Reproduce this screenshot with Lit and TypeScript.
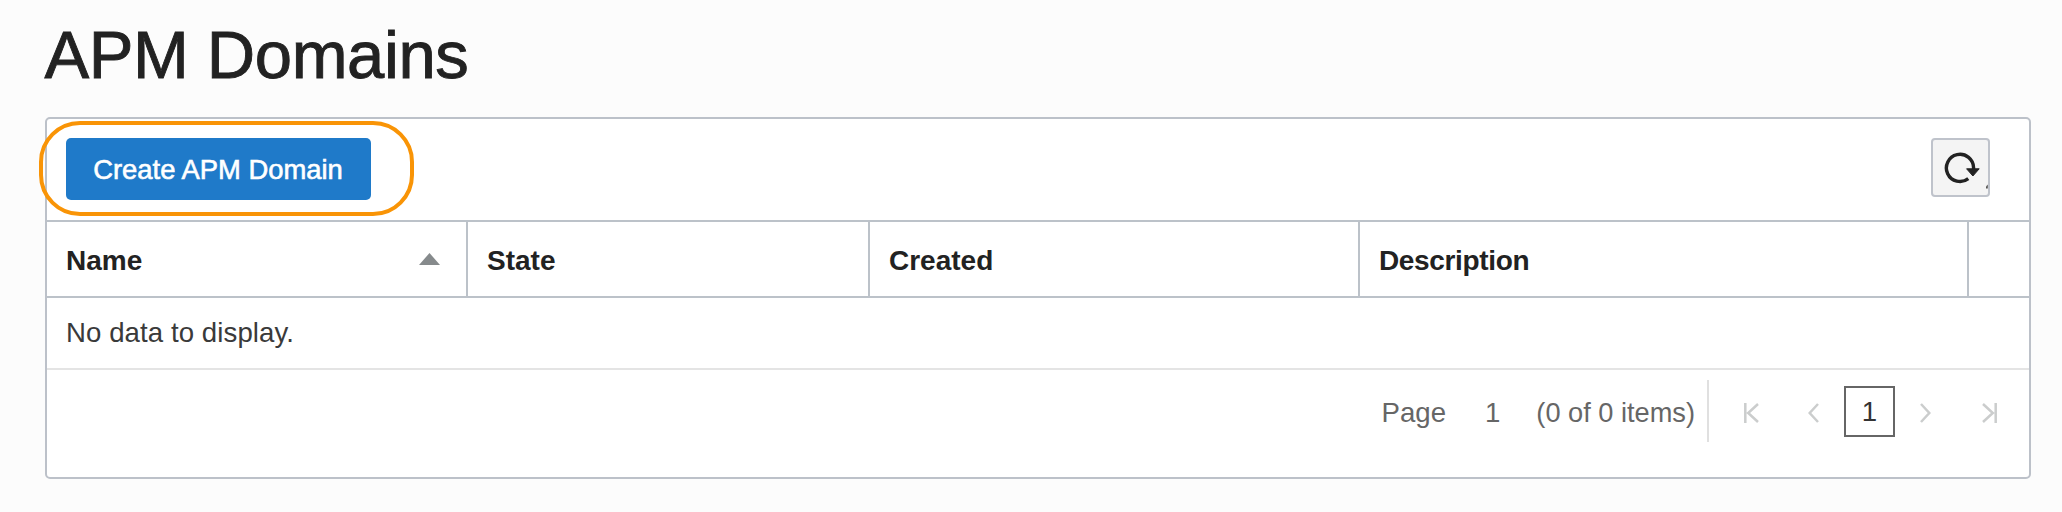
import { LitElement, html, css } from "lit";
import { customElement } from "lit/decorators.js";

@customElement("app-root")
export class AppRoot extends LitElement {
  static styles = css`
    :host {
      display: block;
      box-sizing: border-box;
      height: 512px;
      padding: 19px 31px 0 45px;
      background: #fcfcfc;
      color: #222;
      font: 27.6px "Liberation Sans", Arial, sans-serif;
      overflow: hidden;
    }
    * { box-sizing: border-box; }
    svg { display: block; flex: none; }
    .title {
      margin: 0 0 26px -0.5px;
      font-size: 67px;
      font-weight: 400;
      line-height: 72px;
      letter-spacing: -0.38px;
      white-space: nowrap;
      -webkit-text-stroke: 0.9px #222;
    }
    .panel {
      height: 362px;
      border: 2px solid #bcc1c9;
      border-radius: 5px;
      background: #fff;
    }
    .toolbar {
      display: flex;
      justify-content: space-between;
      height: 103px;
      padding: 19px 39px 0 19px;
      border-bottom: 2px solid #bcc2c9;
    }
    .create-wrap { position: relative; height: 62px; }
    .create {
      width: 305px;
      height: 62px;
      padding: 0 1px 0 0;
      border: 0;
      border-radius: 5px;
      background: #1f7ac9;
      color: #fff;
      font: 27.4px/63px "Liberation Sans", Arial, sans-serif;
      -webkit-text-stroke: 0.6px #fff;
      white-space: nowrap;
    }
    .callout {
      position: absolute;
      left: -27px;
      top: -17px;
      width: 375px;
      height: 95px;
      border: 4px solid #f99406;
      border-radius: 41px;
      pointer-events: none;
    }
    .refresh {
      width: 59px;
      height: 59px;
      padding: 0;
      border: 2px solid #bfc3cb;
      border-radius: 4px;
      background: #f4f4f4;
    }
    .head {
      display: grid;
      grid-template-columns: 421px 402px 490px 609px 1fr;
      height: 76px;
      border-bottom: 2px solid #bcc2c9;
      font-size: 28px;
      font-weight: 700;
    }
    .cell {
      display: flex;
      align-items: center;
      justify-content: space-between;
      padding: 4px 26px 0 19px;
      border-right: 2px solid #bcc2c9;
    }
    .cell:last-child { border-right: 0; }
    .tight { letter-spacing: -0.35px; }
    .sort { margin-top: -4px; }
    .empty {
      display: flex;
      align-items: center;
      height: 72px;
      padding-left: 19px;
      border-bottom: 2px solid #e4e4e4;
      color: #3a3a3a;
      letter-spacing: 0.08px;
    }
    .pager {
      display: flex;
      align-items: center;
      justify-content: flex-end;
      height: 62px;
      margin: 10px 32px 0 0;
      color: #666;
    }
    .label { padding-top: 3px; white-space: nowrap; }
    .page-no { margin: 0 36px 0 39px; }
    .count { font-size: 27.2px; }
    .divider { width: 2px; height: 62px; margin: 0 35px 0 12px; background: #e0e0e0; }
    .current {
      width: 51px;
      height: 51px;
      margin: 0 25px;
      border: 2px solid #666;
      color: #333;
      line-height: 47px;
      text-align: center;
    }
    .nav { fill: none; stroke: #cbcdcd; stroke-width: 2.5; margin-top: 3px; }
    .prev { margin-left: 49px; }
    .last { margin-left: 51px; }
  `;

  render() {
    return html`
      <h1 class="title">APM Domains</h1>
      <section class="panel">
        <div class="toolbar">
          <div class="create-wrap">
            <button class="create">Create APM Domain</button>
            <div class="callout"></div>
          </div>
          <button class="refresh" aria-label="Refresh">
            <svg width="55" height="55" viewBox="0 0 55 55">
              <path d="M35.3 38.7A13.6 13.6 0 1 1 40.6 28V30" fill="none" stroke="#222" stroke-width="3.4" />
              <path d="M33.6 28.8L46.2 28.8L39.9 36Z" fill="#222" stroke="#222" stroke-width="1" />
              <path d="M54.8 44.6L53 46.4V48.6H54.8Z" fill="#555" />
            </svg>
          </button>
        </div>
        <div class="head">
          <div class="cell">
            <span>Name</span>
            <svg class="sort" width="21" height="12" viewBox="0 0 21 12"><path d="M10.5 0L21 12H0Z" fill="#868a8c" /></svg>
          </div>
          <div class="cell">State</div>
          <div class="cell">Created</div>
          <div class="cell tight">Description</div>
          <div class="cell"></div>
        </div>
        <div class="empty">No data to display.</div>
        <div class="pager">
          <span class="label">Page</span>
          <span class="label page-no">1</span>
          <span class="label count">(0 of 0 items)</span>
          <span class="divider"></span>
          <svg class="nav" width="15" height="20" viewBox="0 0 15 20"><path d="M1.3 0V20M14 1L4.2 10L14 19" /></svg>
          <svg class="nav prev" width="11" height="20" viewBox="0 0 11 20"><path d="M10 1L1.7 10L10 19" /></svg>
          <span class="current">1</span>
          <svg class="nav" width="11" height="20" viewBox="0 0 11 20"><path d="M1 1L9.3 10L1 19" /></svg>
          <svg class="nav last" width="15" height="20" viewBox="0 0 15 20"><path d="M13.7 0V20M1 1L10.8 10L1 19" /></svg>
        </div>
      </section>
    `;
  }
}
